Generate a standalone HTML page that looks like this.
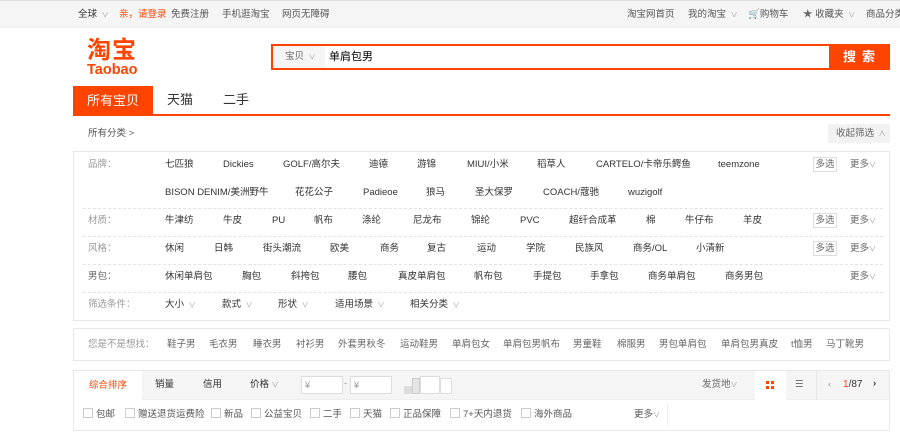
<!DOCTYPE html>
<html><head><meta charset="utf-8"><style>
*{margin:0;padding:0;box-sizing:border-box}
body{width:900px;height:434px;overflow:hidden;background:#fff;font-family:"Liberation Sans","Noto Sans CJK SC",sans-serif;font-size:9.5px;color:#333;position:relative}
.a{position:absolute;white-space:nowrap;line-height:14px}
.g{color:#999}
.top{position:absolute;left:0;top:0;width:900px;height:28px;background:#f5f5f5;border-bottom:1px solid #eee;border-top:1px solid #ddd}
.top .a{top:7px;color:#555}
.box{position:absolute;border:1px solid #e8e8e8;background:#fff}
.dash{position:absolute;left:83px;width:800px;border-top:1px dashed #e3e3e3}
.ms{position:absolute;width:24px;height:15px;border:1px solid #ddd;color:#666;font-size:9.5px;text-align:center;line-height:13px}
.cb{display:inline-block;width:10px;height:10px;border:1px solid #ccc;vertical-align:-1px;margin-right:3px}
.v{font-size:7px;color:#999}
</style></head><body>
<div class="top">
<span class="a" style="left:78px;color:#333">全球 <span class="v">&nbsp;∨</span></span>
<span class="a" style="left:119px;color:#f40">亲，请登录</span>
<span class="a" style="left:171px">免费注册</span>
<span class="a" style="left:222px">手机逛淘宝</span>
<span class="a" style="left:282px">网页无障碍</span>
<span class="a" style="left:627px">淘宝网首页</span>
<span class="a" style="left:688px">我的淘宝 <span class="v">&nbsp;∨</span></span>
<span class="a" style="left:748px"><span style="color:#f40">🛒</span>购物车</span>
<span class="a" style="left:803px"><span style="color:#666">★</span> 收藏夹 <span class="v">&nbsp;∨</span></span>
<span class="a" style="left:866px">商品分类</span>
</div>
<div class="a" style="left:87px;top:38px;font-size:24px;line-height:26px;color:#f40;font-weight:bold;letter-spacing:1px">淘宝</div>
<div class="a" style="left:87px;top:62px;font-size:14.5px;line-height:16px;color:#f40;font-weight:bold">Taobao</div>
<div style="position:absolute;left:271px;top:44px;width:560px;height:26px;border:2px solid #f40;background:#fff"></div>
<div style="position:absolute;left:273px;top:46px;width:52px;height:22px;background:#f5f5f5"></div>
<span class="a" style="left:285px;top:50px;color:#666">宝贝 <span class="v">&nbsp;∨</span></span>
<span class="a" style="left:329px;top:50px;font-size:11px;color:#000">单肩包男</span>
<div style="position:absolute;left:830px;top:44px;width:60px;height:26px;background:#f40;color:#fff;font-weight:bold;font-size:13px;text-align:center;line-height:26px;letter-spacing:6px;padding-left:4px">搜索</div>
<div style="position:absolute;left:73px;top:86px;width:80px;height:29px;background:#f40;color:#fff;font-size:13px;text-align:center;line-height:29px">所有宝贝</div>
<span class="a" style="left:167px;top:93px;font-size:13px">天猫</span>
<span class="a" style="left:223px;top:93px;font-size:13px">二手</span>
<div style="position:absolute;left:73px;top:114px;width:817px;height:2px;background:#f40"></div>
<span class="a" style="left:88px;top:127px;color:#555">所有分类 &gt;</span>
<div style="position:absolute;left:828px;top:124px;width:62px;height:19px;background:#f2f2f2;color:#666;line-height:19px;padding-left:8px">收起筛选 <span class="v">&nbsp;∧</span></div>
<div class="box" style="left:73px;top:151px;width:817px;height:170px"></div>
<div class="dash" style="top:208px"></div><div class="dash" style="top:236px"></div><div class="dash" style="top:264px"></div><div class="dash" style="top:292px"></div>
<div class="box" style="left:73px;top:328px;width:817px;height:33px"></div>
<span class="a g" style="left:88px;top:158px">品牌：</span>
<span class="a g" style="left:88px;top:214px">材质：</span>
<span class="a g" style="left:88px;top:242px">风格：</span>
<span class="a" style="left:88px;top:270px;color:#666">男包：</span>
<span class="a g" style="left:88px;top:298px">筛选条件：</span>
<div style="position:absolute;top:158px">
<span class="a" style="left:165px">七匹狼</span><span class="a" style="left:223px">Dickies</span><span class="a" style="left:283px">GOLF/高尔夫</span><span class="a" style="left:369px">迪德</span><span class="a" style="left:417px">游锦</span><span class="a" style="left:467px">MIUI/小米</span><span class="a" style="left:537px">稻草人</span><span class="a" style="left:596px">CARTELO/卡帝乐鳄鱼</span><span class="a" style="left:718px">teemzone</span></div>
<div style="position:absolute;top:186px">
<span class="a" style="left:165px">BISON DENIM/美洲野牛</span><span class="a" style="left:295px">花花公子</span><span class="a" style="left:363px">Padieoe</span><span class="a" style="left:426px">狼马</span><span class="a" style="left:475px">圣大保罗</span><span class="a" style="left:543px">COACH/蔻驰</span><span class="a" style="left:628px">wuzigolf</span></div>
<div style="position:absolute;top:214px">
<span class="a" style="left:165px">牛津纺</span><span class="a" style="left:223px">牛皮</span><span class="a" style="left:272px">PU</span><span class="a" style="left:314px">帆布</span><span class="a" style="left:362px">涤纶</span><span class="a" style="left:413px">尼龙布</span><span class="a" style="left:471px">锦纶</span><span class="a" style="left:520px">PVC</span><span class="a" style="left:569px">超纤合成革</span><span class="a" style="left:646px">棉</span><span class="a" style="left:685px">牛仔布</span><span class="a" style="left:743px">羊皮</span></div>
<div style="position:absolute;top:242px">
<span class="a" style="left:165px">休闲</span><span class="a" style="left:214px">日韩</span><span class="a" style="left:263px">街头潮流</span><span class="a" style="left:330px">欧美</span><span class="a" style="left:380px">商务</span><span class="a" style="left:427px">复古</span><span class="a" style="left:477px">运动</span><span class="a" style="left:526px">学院</span><span class="a" style="left:575px">民族风</span><span class="a" style="left:633px">商务/OL</span><span class="a" style="left:696px">小清新</span></div>
<div style="position:absolute;top:270px">
<span class="a" style="left:165px">休闲单肩包</span><span class="a" style="left:242px">胸包</span><span class="a" style="left:291px">斜挎包</span><span class="a" style="left:348px">腰包</span><span class="a" style="left:398px">真皮单肩包</span><span class="a" style="left:474px">帆布包</span><span class="a" style="left:533px">手提包</span><span class="a" style="left:590px">手拿包</span><span class="a" style="left:648px">商务单肩包</span><span class="a" style="left:725px">商务男包</span></div>
<div style="position:absolute;top:298px">
<span class="a" style="left:165px">大小 <span class="v">&nbsp;∨</span></span><span class="a" style="left:222px">款式 <span class="v">&nbsp;∨</span></span><span class="a" style="left:278px">形状 <span class="v">&nbsp;∨</span></span><span class="a" style="left:335px">适用场景 <span class="v">&nbsp;∨</span></span><span class="a" style="left:410px">相关分类 <span class="v">&nbsp;∨</span></span></div>
<div class="ms" style="left:813px;top:157px">多选</div><div class="ms" style="left:813px;top:213px">多选</div><div class="ms" style="left:813px;top:241px">多选</div>
<span class="a" style="left:850px;top:158px;color:#666">更多<span class="v">∨</span></span>
<span class="a" style="left:850px;top:214px;color:#666">更多<span class="v">∨</span></span>
<span class="a" style="left:850px;top:242px;color:#666">更多<span class="v">∨</span></span>
<span class="a" style="left:850px;top:270px;color:#666">更多<span class="v">∨</span></span>
<div style="position:absolute;top:338px;color:#666">
<span class="a g" style="left:88px">您是不是想找：</span><span class="a" style="left:167px">鞋子男</span><span class="a" style="left:209px">毛衣男</span><span class="a" style="left:253px">睡衣男</span><span class="a" style="left:296px">衬衫男</span><span class="a" style="left:338px">外套男秋冬</span><span class="a" style="left:400px">运动鞋男</span><span class="a" style="left:452px">单肩包女</span><span class="a" style="left:503px">单肩包男帆布</span><span class="a" style="left:573px">男童鞋</span><span class="a" style="left:617px">棉服男</span><span class="a" style="left:659px">男包单肩包</span><span class="a" style="left:721px">单肩包男真皮</span><span class="a" style="left:791px">t恤男</span><span class="a" style="left:826px">马丁靴男</span></div>
<div class="box" style="left:73px;top:370px;width:817px;height:61px"></div>
<div style="position:absolute;left:74px;top:371px;width:815px;height:29px;background:#f5f5f5;border-bottom:1px solid #eee"></div>
<div style="position:absolute;left:74px;top:371px;width:68px;height:30px;background:#fff;color:#f40;text-align:center;line-height:29px">综合排序</div>
<span class="a" style="left:155px;top:378px">销量</span><span class="a" style="left:203px;top:378px">信用</span><span class="a" style="left:250px;top:378px">价格 <span class="v">∨</span></span>
<div style="position:absolute;left:301px;top:376px;width:42px;height:18px;background:#fff;border:1px solid #ddd;color:#999;font-size:9px;padding-left:3px;line-height:16px">¥</div>
<span class="a g" style="left:344px;top:377px">-</span>
<div style="position:absolute;left:350px;top:376px;width:42px;height:18px;background:#fff;border:1px solid #ddd;color:#999;font-size:9px;padding-left:3px;line-height:16px">¥</div>
<div style="position:absolute;left:404px;top:386px;width:8px;height:8px;background:#ddd"></div>
<div style="position:absolute;left:412px;top:378px;width:8px;height:16px;background:#e5e5e5;border:1px solid #ccc"></div>
<div style="position:absolute;left:420px;top:376px;width:20px;height:18px;background:#fff;border:1px solid #ddd"></div>
<div style="position:absolute;left:440px;top:378px;width:12px;height:16px;background:#fff;border:1px solid #ddd"></div>
<span class="a" style="left:702px;top:378px;color:#666">发货地<span class="v">∨</span></span>
<div style="position:absolute;left:755px;top:371px;width:31px;height:29px;background:#fff"></div>
<div style="position:absolute;left:766px;top:381px;width:3px;height:3px;background:#f40;box-shadow:5px 0 #f40,0 5px #f40,5px 5px #f40"></div>
<span class="a" style="left:795px;top:378px;color:#666">☰</span>
<div style="position:absolute;left:816px;top:371px;width:1px;height:29px;background:#e5e5e5"></div>
<span class="a" style="left:828px;top:378px;color:#999">‹</span>
<span class="a" style="left:843px;top:378px;font-size:10px"><span style="color:#f40">1</span>/87</span>
<span class="a" style="left:873px;top:377px;font-weight:bold">›</span>
<div style="position:absolute;top:408px;color:#555">
<span class="a" style="left:83px"><i class="cb"></i>包邮</span><span class="a" style="left:125px"><i class="cb"></i>赠送退货运费险</span><span class="a" style="left:211px"><i class="cb"></i>新品</span><span class="a" style="left:251px"><i class="cb"></i>公益宝贝</span><span class="a" style="left:310px"><i class="cb"></i>二手</span><span class="a" style="left:350px"><i class="cb"></i>天猫</span><span class="a" style="left:390px"><i class="cb"></i>正品保障</span><span class="a" style="left:450px"><i class="cb"></i>7+天内退货</span><span class="a" style="left:521px"><i class="cb"></i>海外商品</span><span class="a" style="left:634px">更多<span class="v">∨</span></span></div>
<div style="position:absolute;left:667px;top:404px;width:1px;height:22px;background:#eee"></div>
</body></html>
